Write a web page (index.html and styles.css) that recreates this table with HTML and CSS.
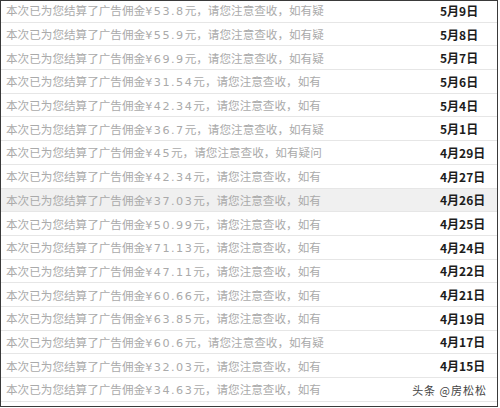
FILE: index.html
```html
<!DOCTYPE html>
<html lang="zh-CN">
<head>
<meta charset="UTF-8">
<meta name="viewport" content="width=device-width, initial-scale=1.0">
<title>佣金结算记录</title>
<link rel="stylesheet" href="styles.css">
</head>
<body>

<!-- Settlement list -->
<div class="msg_frame">
  <div class="msg_list">
    <div class="msg_row"><div class="msg_text">本次已为您结算了广告佣金<span class="amt">¥53.8</span>元，请您注意查收，如有疑</div><div class="msg_date">5月9日</div></div>
    <div class="msg_row"><div class="msg_text">本次已为您结算了广告佣金<span class="amt">¥55.9</span>元，请您注意查收，如有疑</div><div class="msg_date">5月8日</div></div>
    <div class="msg_row"><div class="msg_text">本次已为您结算了广告佣金<span class="amt">¥69.9</span>元，请您注意查收，如有疑</div><div class="msg_date">5月7日</div></div>
    <div class="msg_row"><div class="msg_text">本次已为您结算了广告佣金<span class="amt">¥31.54</span>元，请您注意查收，如有</div><div class="msg_date">5月6日</div></div>
    <div class="msg_row"><div class="msg_text">本次已为您结算了广告佣金<span class="amt">¥42.34</span>元，请您注意查收，如有</div><div class="msg_date">5月4日</div></div>
    <div class="msg_row"><div class="msg_text">本次已为您结算了广告佣金<span class="amt">¥36.7</span>元，请您注意查收，如有疑</div><div class="msg_date">5月1日</div></div>
    <div class="msg_row"><div class="msg_text">本次已为您结算了广告佣金<span class="amt">¥45</span>元，请您注意查收，如有疑问</div><div class="msg_date">4月29日</div></div>
    <div class="msg_row"><div class="msg_text">本次已为您结算了广告佣金<span class="amt">¥42.34</span>元，请您注意查收，如有</div><div class="msg_date">4月27日</div></div>
    <div class="msg_row active"><div class="msg_text">本次已为您结算了广告佣金<span class="amt">¥37.03</span>元，请您注意查收，如有</div><div class="msg_date">4月26日</div></div>
    <div class="msg_row"><div class="msg_text">本次已为您结算了广告佣金<span class="amt">¥50.99</span>元，请您注意查收，如有</div><div class="msg_date">4月25日</div></div>
    <div class="msg_row"><div class="msg_text">本次已为您结算了广告佣金<span class="amt">¥71.13</span>元，请您注意查收，如有</div><div class="msg_date">4月24日</div></div>
    <div class="msg_row"><div class="msg_text">本次已为您结算了广告佣金<span class="amt">¥47.11</span>元，请您注意查收，如有</div><div class="msg_date">4月22日</div></div>
    <div class="msg_row"><div class="msg_text">本次已为您结算了广告佣金<span class="amt">¥60.66</span>元，请您注意查收，如有</div><div class="msg_date">4月21日</div></div>
    <div class="msg_row"><div class="msg_text">本次已为您结算了广告佣金<span class="amt">¥63.85</span>元，请您注意查收，如有</div><div class="msg_date">4月19日</div></div>
    <div class="msg_row"><div class="msg_text">本次已为您结算了广告佣金<span class="amt">¥60.6</span>元，请您注意查收，如有疑</div><div class="msg_date">4月17日</div></div>
    <div class="msg_row"><div class="msg_text">本次已为您结算了广告佣金<span class="amt">¥32.03</span>元，请您注意查收，如有</div><div class="msg_date">4月15日</div></div>
    <div class="msg_row"><div class="msg_text">本次已为您结算了广告佣金<span class="amt">¥34.63</span>元，请您注意查收，如有</div><div class="msg_date"></div></div>
  </div>

  <!-- watermark -->
  <div class="watermark">头条 @房松松</div>
</div>

</body>
</html>
```

FILE: styles.css
```css
body {
  margin: 0;
  background: #FFFFFF;
}

/* Frame */
.msg_frame {
  position: relative;
  box-sizing: border-box;
  width: 498px;
  height: 407px;
  border: 1px solid #3a3a3a;
  overflow: hidden;
  background: #FFFFFF;
}

.msg_list {
  margin-top: -2px;
}

/* Rows */
.msg_row {
  box-sizing: border-box;
  display: grid;
  grid-template-columns: 1fr 57px;
  align-items: center;
  height: 23.7px;
  border-bottom: 1px solid #e6e6e6;
}

.msg_row.active {
  background: #f0f0f0;
}

.msg_text {
  padding-left: 5px;
  color: #aaaaaa;
  font-family: "Noto Sans CJK SC", sans-serif;
  font-size: 11.6px;
  white-space: nowrap;
  overflow: hidden;
}

.amt {
  font-family: "DejaVu Sans", sans-serif;
  font-size: 11.2px;
  letter-spacing: 1.5px;
}

.msg_date {
  color: #1c1c1c;
  font-family: "Noto Sans CJK SC", sans-serif;
  font-weight: 700;
  font-size: 12px;
  white-space: nowrap;
}

.watermark {
  position: absolute;
  right: 10px;
  bottom: 8px;
  color: #444;
  font-family: "Noto Sans CJK SC", sans-serif;
  font-size: 11px;
  letter-spacing: 1px;
  text-shadow: 0 0 2px #fff, 0 0 2px #fff;
}
```
